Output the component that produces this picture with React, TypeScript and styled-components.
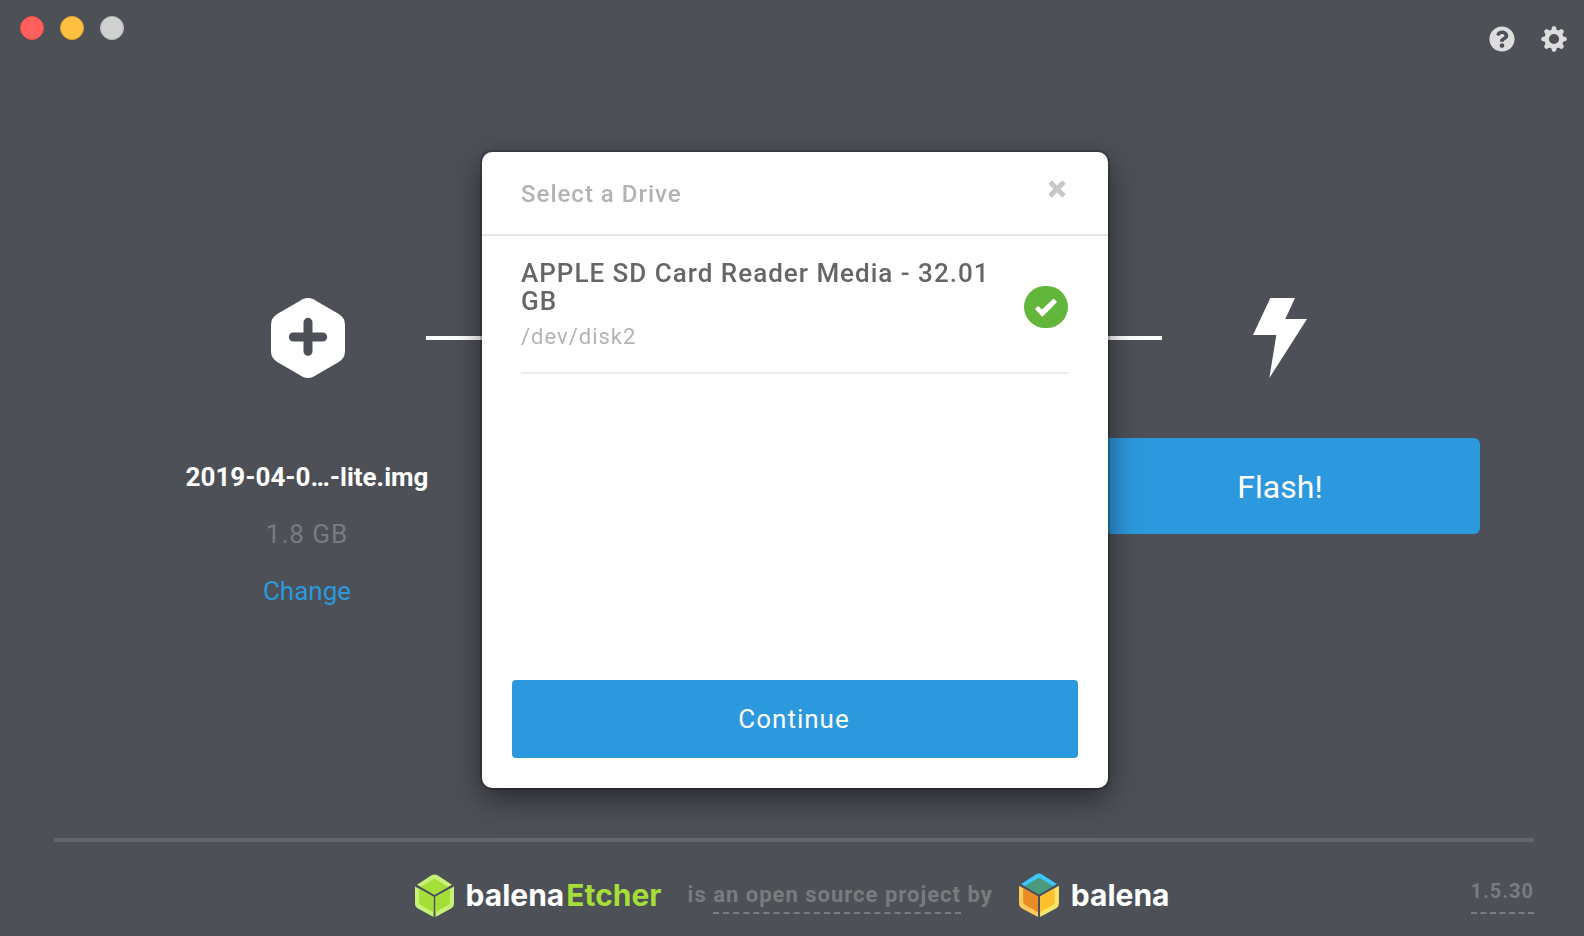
import React from 'react';
import styled, { createGlobalStyle } from 'styled-components';
import { FaQuestionCircle } from 'react-icons/fa';

const GlobalStyle = createGlobalStyle`
  *, *::before, *::after { box-sizing: border-box; }
  body {
    margin: 0;
    background: #4d5057;
    font-family: Roboto, "Liberation Sans", sans-serif;
  }
  button { font-family: inherit; border: 0; padding: 0; cursor: pointer; }
`;

const Window = styled.div`
  min-height: 100vh;
  display: flex;
  flex-direction: column;
  color: #fff;
`;

const TitleBar = styled.header`
  display: flex;
  justify-content: space-between;
  height: 78px;
  padding: 16px 17px 0 20px;
`;

const WindowControls = styled.div`
  display: flex;
  gap: 16px;
`;

const WindowButton = styled.button<{ $fill: string; $edge: string }>`
  width: 24px;
  height: 24px;
  border-radius: 50%;
  background: ${(p) => p.$fill};
  border: 1px solid ${(p) => p.$edge};
`;

const Toolbar = styled.nav`
  display: flex;
  gap: 26px;
  padding-top: 10px;
`;

const ToolButton = styled.button`
  width: 26px;
  height: 26px;
  background: none;
  color: #ddd;
  svg { display: block; }
`;

const Steps = styled.main`
  flex: 1;
  display: grid;
  grid-template-columns: repeat(3, 1fr);
  align-content: start;
  padding: 220px 61px 0 65px;
`;

const Step = styled.section`
  display: flex;
  flex-direction: column;
  align-items: center;
  gap: 60px;
`;

const StepTrack = styled.div`
  align-self: stretch;
  display: flex;
  align-items: center;
  height: 80px;
`;

const Rail = styled.span<{ $on?: boolean }>`
  flex: 1;
  height: 4px;
  background: ${(p) => (p.$on ? '#fff' : 'transparent')};
`;

const StepIcon = styled.span`
  width: 236px;
  display: flex;
  justify-content: center;
`;

const ImageDetails = styled.div`
  display: flex;
  flex-direction: column;
  align-items: center;
  gap: 27px;
  padding: 24px 2px 0 0;
  font-size: 26px;
  line-height: 30px;
`;

const FileName = styled.strong`
  font-weight: 700;
`;

const FileSize = styled.span`
  color: #787c7f;
  letter-spacing: 1px;
`;

const ChangeButton = styled.button`
  background: none;
  color: #2c98dd;
  font-size: 26px;
  line-height: 30px;
`;

const PrimaryButton = styled.button`
  background: #2c98dd;
  color: #fff;
`;

const FlashButton = styled(PrimaryButton)`
  width: 400px;
  height: 96px;
  padding-top: 2px;
  border-radius: 6px;
  font-size: 32px;
`;

const Footer = styled.footer`
  margin: 0 50px 0 54px;
  height: 98px;
  border-top: 4px solid #64686a;
  display: grid;
  grid-template-columns: 1fr auto 1fr;
  align-items: start;
  padding-top: 31px;
  color: #787c7f;
`;

const Credits = styled.div`
  grid-column: 2;
  display: flex;
  align-items: flex-start;
  gap: 26px;
  padding-right: 4px;
`;

const Brand = styled.a`
  display: flex;
  align-items: center;
  gap: 12px;
  height: 44px;
  color: #fff;
  font: 700 30px/32px Inter, sans-serif;
  text-decoration: none;
`;

const Accent = styled.span`
  margin-left: 2px;
  color: #a5de37;
`;

const Tagline = styled.span`
  padding-top: 7px;
  font-size: 22px;
  line-height: 30px;
  font-weight: 700;
  letter-spacing: 1px;
`;

const DashedLink = styled.a`
  display: inline-block;
  padding-bottom: 2px;
  border-bottom: 2px dashed #787c7f;
  color: inherit;
  text-decoration: none;
`;

const Version = styled.span`
  grid-column: 3;
  justify-self: end;
  padding-top: 5px;
  font-size: 20px;
  line-height: 26px;
  font-weight: 700;
  letter-spacing: 1px;
  ${DashedLink} { padding-bottom: 8px; }
`;

const Overlay = styled.div`
  position: fixed;
  inset: 0;
  display: flex;
  align-items: center;
  justify-content: center;
  padding: 4px 0 0 6px;
`;

const Dialog = styled.div`
  display: flex;
  flex-direction: column;
  width: 626px;
  min-height: 636px;
  border-radius: 10px;
  background: #fff;
  box-shadow: 0 0 0 2px rgba(0, 0, 0, 0.2), 0 10px 30px rgba(0, 0, 0, 0.5);
`;

const DialogHeader = styled.div`
  display: flex;
  justify-content: space-between;
  align-items: flex-start;
  height: 84px;
  padding: 27px 41px 0 39px;
  border-bottom: 2px solid #e5e5e5;
`;

const DialogTitle = styled.h2`
  margin: 0;
  color: #b3b3b3;
  font-size: 24px;
  line-height: 30px;
  font-weight: 500;
  letter-spacing: 1px;
`;

const CloseButton = styled.button`
  width: 20px;
  height: 20px;
  background: none;
  svg { display: block; }
`;

const DriveList = styled.ul`
  flex: 1;
  margin: 0;
  padding: 0 40px 0 39px;
  list-style: none;
`;

const DriveRow = styled.label`
  display: flex;
  align-items: center;
  justify-content: space-between;
  height: 138px;
  padding-top: 5px;
  border-bottom: 2px solid #ececec;
  cursor: pointer;
`;

const DriveText = styled.span`
  display: flex;
  flex-direction: column;
  gap: 7px;
  max-width: 482px;
  padding-bottom: 3px;
`;

const DriveName = styled.span`
  color: #666;
  font-size: 26px;
  line-height: 28px;
  font-weight: 500;
  letter-spacing: 1px;
`;

const DrivePath = styled.span`
  color: #b3b3b3;
  font-size: 22px;
  line-height: 30px;
  letter-spacing: 1px;
`;

const DriveCheckbox = styled.input`
  position: absolute;
  opacity: 0;
`;

const CheckBadge = styled.span`
  width: 44px;
  height: 42px;
  border-radius: 21px;
  background: #62b63c;
  svg { display: block; }
`;

const DialogFooter = styled.div`
  padding: 30px;
`;

const ContinueButton = styled(PrimaryButton)`
  width: 100%;
  height: 78px;
  padding-right: 2px;
  border-radius: 4px;
  font-size: 26px;
  letter-spacing: 1px;
`;

const teeth = [0, 45, 90, 135, 180, 225, 270, 315];

const GearIcon = () => (
  <svg width="26" height="26" viewBox="-13 -13 26 26" aria-hidden="true">
    <circle r="7.3" fill="none" stroke="currentColor" strokeWidth="4.4" />
    {teeth.map((angle) => (
      <path
        key={angle}
        transform={`rotate(${angle})`}
        d="M-3.6 -8 Q-2.2 -9.5 -2.1 -11.6 Q-1.8 -12.8 0 -12.8 Q1.8 -12.8 2.1 -11.6 Q2.2 -9.5 3.6 -8Z"
        fill="currentColor"
      />
    ))}
  </svg>
);

const PlusHexIcon = () => (
  <svg width="74" height="80" viewBox="0 0 222 240" aria-hidden="true">
    <path
      d="M95 4Q111-4 127 4L202 47Q222 59 222 80V160Q222 181 202 193L127 236Q111 244 95 236L20 193Q0 181 0 160V80Q0 59 20 47Z"
      fill="#fff"
    />
    <path d="M111 73V160M67 117H155" stroke="#4d5057" strokeWidth="27" strokeLinecap="round" />
  </svg>
);

const BoltIcon = () => (
  <svg width="54" height="80" viewBox="0 0 162 240" aria-hidden="true">
    <path d="M52 0H126L97 63H162L49 240L70 111H0Z" fill="#fff" />
  </svg>
);

const CloseIcon = () => (
  <svg width="20" height="20" viewBox="0 0 20 20" aria-hidden="true">
    <path d="M3 3L17 17M17 3L3 17" stroke="#c8c8c8" strokeWidth="5" />
  </svg>
);

const CheckIcon = () => (
  <svg width="44" height="42" viewBox="0 0 44 42" aria-hidden="true">
    <path d="M11 23L14 20L18 23.6L29.6 12.6L33 16L18.3 31Z" fill="#fff" />
  </svg>
);

type Face = { edge: string; fill: string };

const CubeLogo = ({ size, top, left, right }: { size: number; top: Face; left: Face; right: Face }) => (
  <svg width={size} height={size + 4} viewBox="0 0 116 128" aria-hidden="true">
    <path d="M6 32L49 4Q58-1 67 4L110 32L58 62Z" fill={top.edge} />
    <path d="M17 38L53 16Q58 13 63 16L99 38L58 62Z" fill={top.fill} />
    <path d="M0 37L55 68V128L9 103Q0 98 0 88Z" fill={left.edge} />
    <path d="M12 44L55 68V114L17 92Q12 89 12 84Z" fill={left.fill} />
    <path d="M116 37L61 68V128L107 103Q116 98 116 88Z" fill={right.edge} />
    <path d="M104 44L61 68V114L99 92Q104 89 104 84Z" fill={right.fill} />
  </svg>
);

const green: Face = { edge: '#c8f178', fill: '#a5de37' };

export default function App() {
  return (
    <>
      <GlobalStyle />
      <Window>
        <TitleBar>
          <WindowControls>
            <WindowButton aria-label="Close window" $fill="#ff605c" $edge="#e84f4b" />
            <WindowButton aria-label="Minimize window" $fill="#ffbf40" $edge="#e5a52e" />
            <WindowButton aria-label="Zoom window" $fill="#d0d0d0" $edge="#bdbdbd" />
          </WindowControls>
          <Toolbar>
            <ToolButton aria-label="Help"><FaQuestionCircle size={26} /></ToolButton>
            <ToolButton aria-label="Settings"><GearIcon /></ToolButton>
          </Toolbar>
        </TitleBar>

        <Steps>
          <Step>
            <StepTrack>
              <Rail />
              <StepIcon><PlusHexIcon /></StepIcon>
              <Rail $on />
            </StepTrack>
            <ImageDetails>
              <FileName>2019-04-0…-lite.img</FileName>
              <FileSize>1.8 GB</FileSize>
              <ChangeButton>Change</ChangeButton>
            </ImageDetails>
          </Step>
          <Step>
            <StepTrack>
              <Rail $on />
              <StepIcon />
              <Rail $on />
            </StepTrack>
          </Step>
          <Step>
            <StepTrack>
              <Rail $on />
              <StepIcon><BoltIcon /></StepIcon>
              <Rail />
            </StepTrack>
            <FlashButton>Flash!</FlashButton>
          </Step>
        </Steps>

        <Footer>
          <Credits>
            <Brand href="#etcher">
              <CubeLogo size={39} top={green} left={green} right={green} />
              <span>balena<Accent>Etcher</Accent></span>
            </Brand>
            <Tagline>
              is <DashedLink href="#source">an open source project</DashedLink> by
            </Tagline>
            <Brand href="#balena">
              <CubeLogo
                size={40}
                top={{ edge: '#3cc8fa', fill: '#4a9a7b' }}
                left={{ edge: '#fccb58', fill: '#ea8c25' }}
                right={{ edge: '#f8e56a', fill: '#fdc02c' }}
              />
              <span>balena</span>
            </Brand>
          </Credits>
          <Version><DashedLink href="#changelog">1.5.30</DashedLink></Version>
        </Footer>
      </Window>

      <Overlay>
        <Dialog role="dialog" aria-labelledby="drive-title">
          <DialogHeader>
            <DialogTitle id="drive-title">Select a Drive</DialogTitle>
            <CloseButton aria-label="Close"><CloseIcon /></CloseButton>
          </DialogHeader>
          <DriveList>
            <li>
              <DriveRow>
                <DriveText>
                  <DriveName>APPLE SD Card Reader Media - 32.01 GB</DriveName>
                  <DrivePath>/dev/disk2</DrivePath>
                </DriveText>
                <DriveCheckbox type="checkbox" defaultChecked />
                <CheckBadge><CheckIcon /></CheckBadge>
              </DriveRow>
            </li>
          </DriveList>
          <DialogFooter>
            <ContinueButton>Continue</ContinueButton>
          </DialogFooter>
        </Dialog>
      </Overlay>
    </>
  );
}
